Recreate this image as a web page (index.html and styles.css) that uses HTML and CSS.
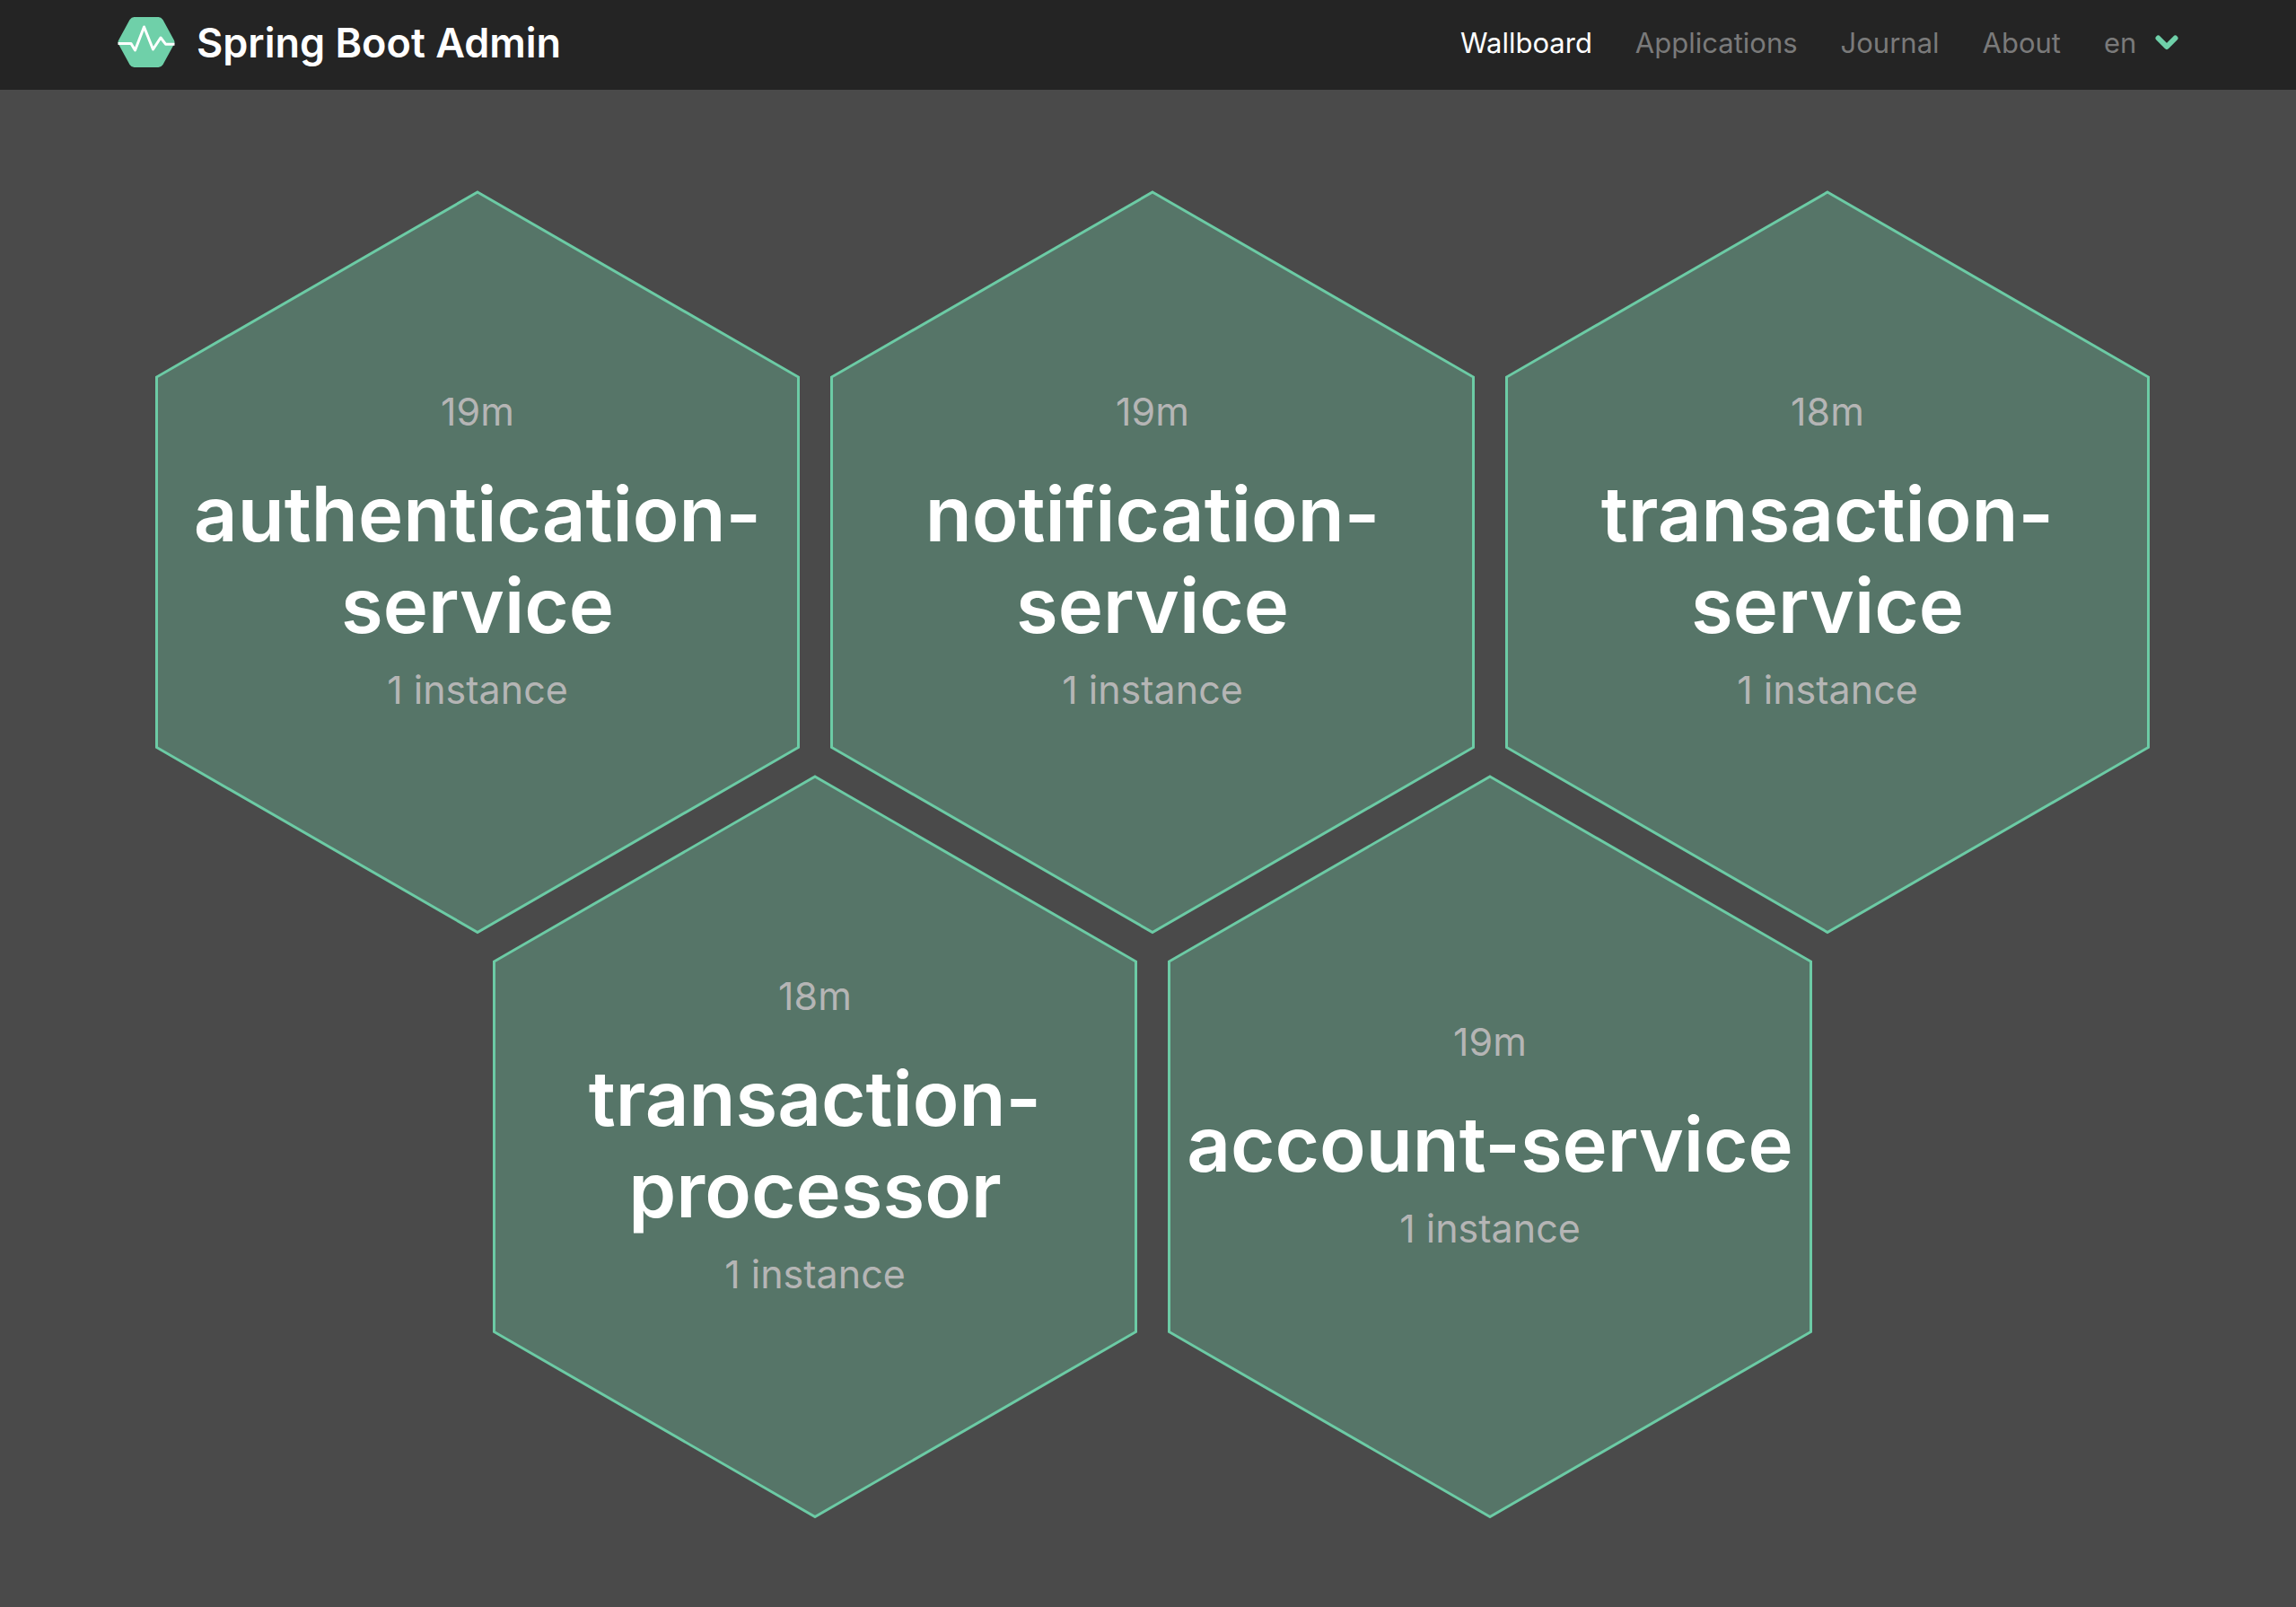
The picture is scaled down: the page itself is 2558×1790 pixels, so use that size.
FILE: index.html
```html
<!DOCTYPE html>
<html lang="en">
<head>
  <meta charset="utf-8">
  <meta name="viewport" content="width=device-width, initial-scale=1">
  <title>Spring Boot Admin</title>
  <link rel="stylesheet" href="styles.css">
</head>
<body>
  <svg class="sprite" aria-hidden="true">
    <symbol id="hexagon" viewBox="0 0 718 830">
      <polygon points="359,3 716.5,209 716.5,621.5 359,827.5 1.5,621.5 1.5,209"/>
    </symbol>
  </svg>

  <header class="navbar">
    <a class="brand" href="#">
      <svg class="brand-logo" viewBox="0 0 63 56" aria-hidden="true">
        <path class="logo-shape" d="M18 0H45Q48 0 50 3L62 25Q64 28 62 31L50 53Q48 56 45 56H18Q15 56 13 53L1 31Q-1 28 1 25L13 3Q15 0 18 0Z"/>
        <path class="logo-pulse" d="M0 29.5H14.5L19 37L29 11L39 36L47.5 23L53 30.2H63"/>
      </svg>
      <span class="brand-name">Spring Boot Admin</span>
    </a>
    <nav class="menu">
      <a class="menu-link is-active" href="#wallboard">Wallboard</a>
      <a class="menu-link" href="#applications">Applications</a>
      <a class="menu-link" href="#journal">Journal</a>
      <a class="menu-link" href="#about">About</a>
      <label class="language">
        <select class="language-select" aria-label="Language">
          <option>en</option>
        </select>
        <svg class="language-arrow" viewBox="0 0 26 18" aria-hidden="true">
          <path d="M3.5 4.5L13 14L22.5 4.5"/>
        </svg>
      </label>
    </nav>
  </header>

  <main class="wallboard">
    <a class="application" href="#authentication-service">
      <svg class="hexagon" viewBox="0 0 718 830" aria-hidden="true"><use href="#hexagon"/></svg>
      <div class="details">
        <span class="meta">19m</span>
        <h2 class="name">authentication-<wbr>service</h2>
        <span class="meta">1 instance</span>
      </div>
    </a>
    <a class="application" href="#notification-service">
      <svg class="hexagon" viewBox="0 0 718 830" aria-hidden="true"><use href="#hexagon"/></svg>
      <div class="details">
        <span class="meta">19m</span>
        <h2 class="name">notification-<wbr>service</h2>
        <span class="meta">1 instance</span>
      </div>
    </a>
    <a class="application" href="#transaction-service">
      <svg class="hexagon" viewBox="0 0 718 830" aria-hidden="true"><use href="#hexagon"/></svg>
      <div class="details">
        <span class="meta">18m</span>
        <h2 class="name">transaction-<wbr>service</h2>
        <span class="meta">1 instance</span>
      </div>
    </a>
    <a class="application" href="#transaction-processor">
      <svg class="hexagon" viewBox="0 0 718 830" aria-hidden="true"><use href="#hexagon"/></svg>
      <div class="details">
        <span class="meta">18m</span>
        <h2 class="name">transaction-<wbr>processor</h2>
        <span class="meta">1 instance</span>
      </div>
    </a>
    <a class="application" href="#account-service">
      <svg class="hexagon" viewBox="0 0 718 830" aria-hidden="true"><use href="#hexagon"/></svg>
      <div class="details">
        <span class="meta">19m</span>
        <h2 class="name">account-<wbr>service</h2>
        <span class="meta">1 instance</span>
      </div>
    </a>
  </main>
</body>
</html>
```
FILE: styles.css
```css
* {
  box-sizing: border-box;
}

body {
  margin: 0;
  min-height: 100vh;
  background: #4a4a4a;
  font-family: Inter, "Liberation Sans", sans-serif;
  color: #fff;
}

a {
  color: inherit;
  text-decoration: none;
}

.sprite {
  display: none;
}

/* Navigation bar */
.navbar {
  display: flex;
  align-items: center;
  justify-content: space-between;
  min-height: 100px;
  padding: 0 131px 6px;
  background: #242424;
}

.brand {
  display: flex;
  align-items: center;
  gap: 24px;
}

.brand-logo {
  width: 64px;
  height: 56px;
}

.logo-shape {
  fill: #6fd0a9;
}

.logo-pulse {
  fill: none;
  stroke: #fff;
  stroke-width: 3;
  stroke-linejoin: round;
}

.brand-name {
  font-size: 45px;
  font-weight: 600;
}

.menu {
  display: flex;
  align-items: center;
  gap: 48px;
  font-size: 31px;
  color: #7a7a7a;
}

.menu-link.is-active {
  color: #fff;
}

.language {
  display: flex;
  align-items: center;
  gap: 20px;
}

.language-select {
  appearance: none;
  padding: 0;
  border: 0;
  background: none;
  font: inherit;
  color: inherit;
}

.language-arrow {
  width: 26px;
  height: 18px;
  fill: none;
  stroke: #6fd0a9;
  stroke-width: 6;
  stroke-linecap: round;
  stroke-linejoin: round;
}

/* Honeycomb: three cells, then two cells shifted by half a cell */
.wallboard {
  display: grid;
  grid-template-columns: repeat(6, 1fr);
  column-gap: 34px;
  padding: 111px 163px 80px 173px;
}

.application {
  display: grid;
  grid-column: span 2;
  min-width: 0;
}

.application:nth-child(5n + 4) {
  grid-column: 2 / span 2;
}

.application:nth-child(5n + 4),
.application:nth-child(5n + 5) {
  margin-top: -25%;
}

.hexagon {
  grid-area: 1 / 1;
  width: 100%;
  fill: #567568;
  stroke: #6ccba5;
  stroke-width: 3;
}

.details {
  grid-area: 1 / 1;
  display: flex;
  flex-direction: column;
  align-items: center;
  justify-content: center;
  padding-bottom: 26px;
  text-align: center;
}

.name {
  margin: 38px 0 16px;
  font-size: 85px;
  font-weight: 600;
  line-height: 102px;
}

.meta {
  font-size: 43px;
  line-height: 52px;
  color: #b5b5b5;
}
```
